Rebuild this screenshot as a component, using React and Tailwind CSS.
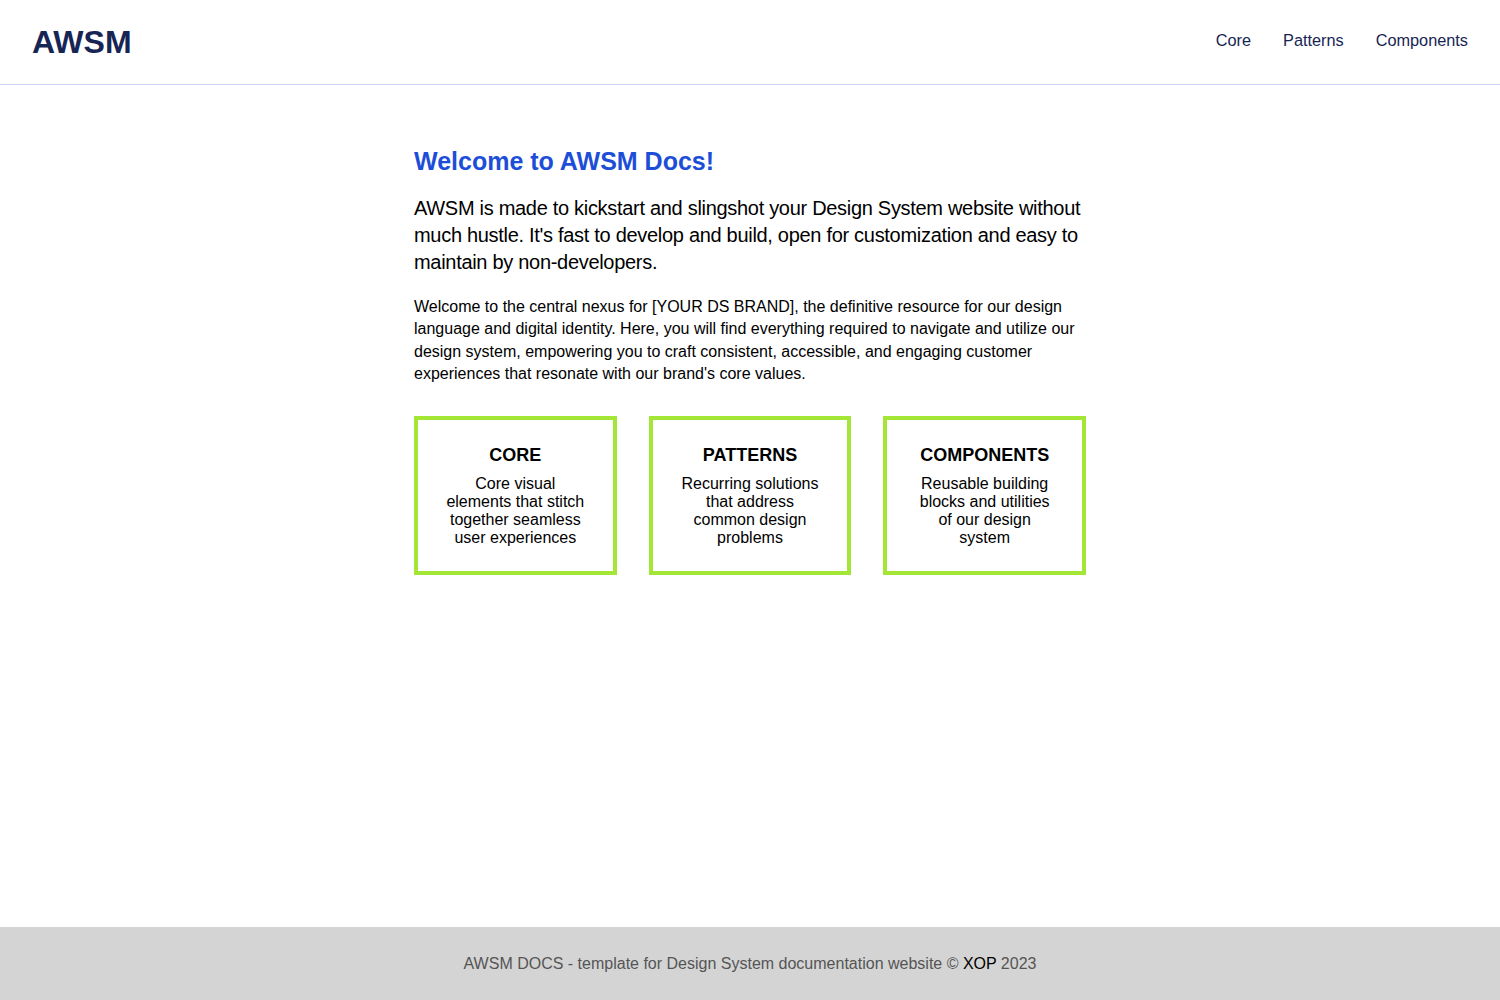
const cards = [
  {
    title: 'CORE',
    text: 'Core visual elements that stitch together seamless user experiences',
  },
  {
    title: 'PATTERNS',
    text: 'Recurring solutions that address common design problems',
  },
  {
    title: 'COMPONENTS',
    text: 'Reusable building blocks and utilities of our design system',
  },
];

function Header() {
  return (
    <header className="h-[85px] border-b border-[#c9d8f8] flex items-center justify-between px-8">
      <a href="#" className="text-[32px] font-bold text-[#172554] leading-none pb-[1px]">
        AWSM
      </a>
      <nav className="flex items-center gap-8 text-[16.3px] text-[#172554] pb-[4px]">
        <a href="#">Core</a>
        <a href="#">Patterns</a>
        <a href="#">Components</a>
      </nav>
    </header>
  );
}

function Card({ title, text }) {
  return (
    <div className="border-4 border-[#a3e635] h-[159px] flex flex-col items-center justify-center px-7 text-center">
      <h3 className="text-[18px] font-bold text-black leading-6 mb-[8px]">{title}</h3>
      <p className="text-[16px] text-black leading-[18.3px]">{text}</p>
    </div>
  );
}

export default function App() {
  return (
    <div className="min-h-screen flex flex-col bg-white font-['Liberation_Sans',Arial,sans-serif]">
      <Header />
      <main className="flex-1">
        <div className="w-[672px] mx-auto pt-[61px]">
          <h1 className="text-[25px] font-bold text-[#1d4ed8] leading-[30px]">
            Welcome to AWSM Docs!
          </h1>
          <p className="mt-[19px] text-[20px] leading-[27px] tracking-[-0.3px] text-black">
            AWSM is made to kickstart and slingshot your Design System website without much hustle.
            It's fast to develop and build, open for customization and easy to maintain by
            non-developers.
          </p>
          <p className="mt-[20px] text-[16px] leading-[22.4px] text-black">
            Welcome to the central nexus for [YOUR DS BRAND], the definitive resource for our design
            language and digital identity. Here, you will find everything required to navigate and
            utilize our design system, empowering you to craft consistent, accessible, and engaging
            customer experiences that resonate with our brand's core values.
          </p>
          <div className="mt-[30px] grid grid-cols-3 gap-8">
            {cards.map((c) => (
              <Card key={c.title} {...c} />
            ))}
          </div>
        </div>
      </main>
      <footer className="h-[73px] bg-[#d4d4d4] flex items-center justify-center text-[16px] text-[#555555]">
        <p>
          AWSM DOCS - template for Design System documentation website © <a href="#" className="text-black">XOP</a> 2023
        </p>
      </footer>
    </div>
  );
}
